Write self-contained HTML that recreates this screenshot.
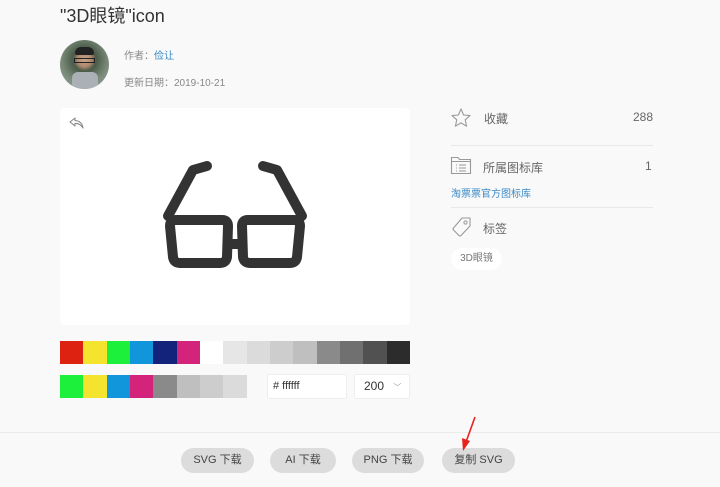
<!DOCTYPE html>
<html><head><meta charset="utf-8"><style>
*{margin:0;padding:0;box-sizing:border-box}
body{width:720px;height:487px;background:#f9f9f9;font-family:"Liberation Sans","Noto Sans CJK SC",sans-serif;position:relative;overflow:hidden;color:#333}
.a{position:absolute}
.sw{position:absolute;height:23px;display:flex}
.sw div{width:23.33px;height:23px}
.btn{position:absolute;top:448px;height:25px;border-radius:13px;background:#dcdcdc;font-size:11px;color:#444;text-align:center;line-height:25px}
.line{position:absolute;height:1px;background:#e8e8e8}
</style></head><body>
<div class="a" style="left:60px;top:2px;font-size:18px;color:#333">"3D眼镜"icon</div>
<div class="a" style="left:60px;top:40px;width:49px;height:49px;border-radius:50%;background:radial-gradient(circle at 50% 40%,#c9a58a 0,#b08a70 18%,#4a5a48 30%,#7a8a78 60%,#9aa 100%);overflow:hidden">
<div class="a" style="left:12px;top:32px;width:26px;height:18px;background:#aab0b6;border-radius:6px 6px 0 0"></div>
<div class="a" style="left:15px;top:7px;width:19px;height:8px;background:#222;border-radius:6px 6px 2px 2px"></div>
<div class="a" style="left:14px;top:18px;width:21px;height:5px;border:1.5px solid #222"></div></div>
<div class="a" style="left:124px;top:47px;font-size:10px;color:#888">作者：<span style="color:#3a8ac8">俭让</span></div>
<div class="a" style="left:124px;top:74px;font-size:10px;color:#888">更新日期：2019-10-21</div>
<div class="a" style="left:60px;top:108px;width:350px;height:217px;background:#fff;border-radius:4px"></div>
<svg class="a" style="left:68px;top:116px" width="18" height="14" viewBox="0 0 18 14"><path d="M7 2 L2 6 L7 10 L7 7.5 Q12 7 15 12 Q14 5 7 4.5 Z" fill="none" stroke="#888" stroke-width="1.1" stroke-linejoin="round"/></svg>
<svg class="a" style="left:150px;top:150px" width="170" height="130" viewBox="150 150 170 130">
<g fill="none" stroke="#333" stroke-width="10" stroke-linecap="round" stroke-linejoin="round">
<path d="M207 166 L193 170 L168 216"/><path d="M263 166 L277 170 L302 216"/>
<path d="M176 220 L222 220 Q228 220 228 226 L227 257 Q226 263 220 263 L180 263 Q174 263 173 257 L170 226 Q170 220 176 220 Z"/>
<path d="M248 220 L294 220 Q300 220 300 226 L297 257 Q296 263 290 263 L250 263 Q244 263 243 257 L242 226 Q242 220 248 220 Z"/>
<path d="M229 244 L241 244"/></g></svg>
<div class="sw" style="left:60px;top:341px"><div style="background:#dd2211"></div><div style="background:#f4e42e"></div><div style="background:#1cf03a"></div><div style="background:#1296db"></div><div style="background:#13227a"></div><div style="background:#d4237a"></div><div style="background:#fff"></div><div style="background:#e6e6e6"></div><div style="background:#dbdbdb"></div><div style="background:#cdcdcd"></div><div style="background:#bfbfbf"></div><div style="background:#8a8a8a"></div><div style="background:#707070"></div><div style="background:#515151"></div><div style="background:#2c2c2c"></div></div>
<div class="sw" style="left:60px;top:375px"><div style="background:#1cf03a"></div><div style="background:#f4e42e"></div><div style="background:#1296db"></div><div style="background:#d4237a"></div><div style="background:#8a8a8a"></div><div style="background:#bfbfbf"></div><div style="background:#cdcdcd"></div><div style="background:#dbdbdb"></div></div>
<div class="a" style="left:267px;top:374px;width:80px;height:25px;background:#fff;border:1px solid #eee;border-radius:2px;font-size:11px;line-height:23px;padding-left:5px;color:#333"># ffffff</div>
<div class="a" style="left:354px;top:374px;width:56px;height:25px;background:#fff;border:1px solid #eee;border-radius:2px;font-size:12px;line-height:23px;padding-left:9px;color:#333">200 <span style="font-size:8px;color:#999;margin-left:6px">﹀</span></div>
<svg class="a" style="left:450px;top:107px" width="22" height="22" viewBox="0 0 22 22"><path d="M11 2 L13.6 8 L20 8.6 L15.2 12.8 L16.6 19.2 L11 15.9 L5.4 19.2 L6.8 12.8 L2 8.6 L8.4 8 Z" fill="none" stroke="#999" stroke-width="1.1" stroke-linejoin="round"/></svg>
<div class="a" style="left:484px;top:110px;font-size:12px;color:#666">收藏</div>
<div class="a" style="left:633px;top:110px;font-size:12px;color:#666">288</div>
<div class="line" style="left:451px;top:145px;width:202px"></div>
<svg class="a" style="left:450px;top:156px" width="22" height="19" viewBox="0 0 22 19"><path d="M1.5 1.5 H8 L9.5 3.5 H20.5 V17.5 H1.5 Z M1.5 5.5 H20.5" fill="none" stroke="#999" stroke-width="1.1"/><path d="M6 9h1M9 9h7M6 12h1M9 12h7M6 15h1M9 15h7" stroke="#999" stroke-width="1.1"/></svg>
<div class="a" style="left:483px;top:159px;font-size:12px;color:#666">所属图标库</div>
<div class="a" style="left:645px;top:159px;font-size:12px;color:#666">1</div>
<div class="a" style="left:451px;top:185px;font-size:10px;color:#3a8ac8">淘票票官方图标库</div>
<div class="line" style="left:451px;top:207px;width:202px"></div>
<svg class="a" style="left:451px;top:216px" width="22" height="22" viewBox="0 0 22 22"><path d="M11 2 H19 V10 L10 19.5 Q9 20.5 8 19.5 L2.5 14 Q1.5 13 2.5 12 Z" fill="none" stroke="#999" stroke-width="1.1" stroke-linejoin="round"/><circle cx="14.5" cy="6.5" r="1.6" fill="none" stroke="#999"/></svg>
<div class="a" style="left:483px;top:220px;font-size:12px;color:#666">标签</div>
<div class="a" style="left:451px;top:248px;width:51px;height:22px;background:#fff;border-radius:11px;font-size:10px;color:#777;text-align:center;line-height:22px">3D眼镜</div>
<div class="line" style="left:0;top:432px;width:720px;background:#ececec"></div>
<div class="btn" style="left:181px;width:73px">SVG 下载</div>
<div class="btn" style="left:270px;width:66px">AI 下载</div>
<div class="btn" style="left:352px;width:72px">PNG 下载</div>
<div class="btn" style="left:442px;width:73px">复制 SVG</div>
<svg class="a" style="left:455px;top:414px" width="25" height="40" viewBox="0 0 25 40"><path d="M20 3 L11 28" stroke="#e8231c" stroke-width="1.6"/><path d="M7 24 L8 37 L15 27 Z" fill="#e8231c"/></svg>
</body></html>
